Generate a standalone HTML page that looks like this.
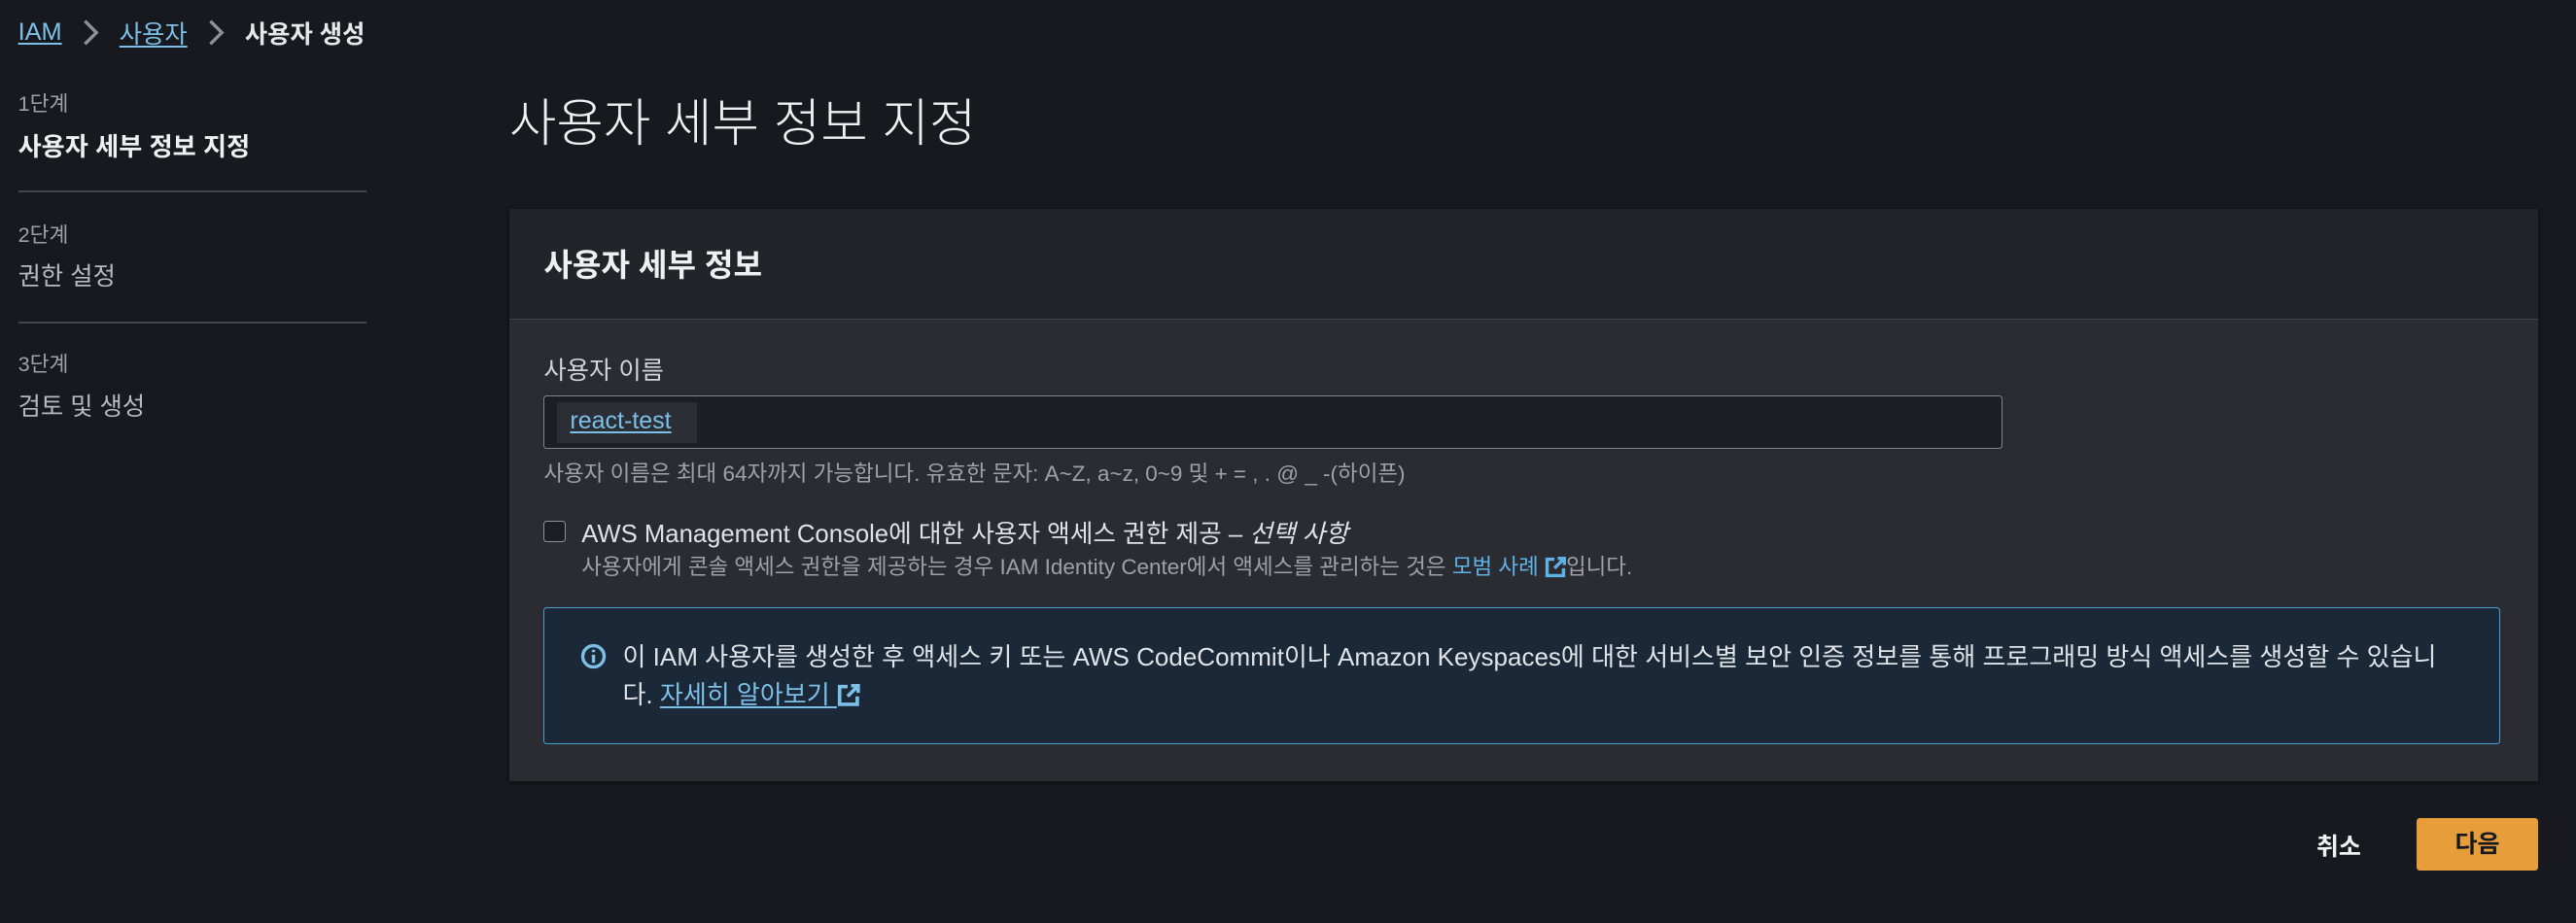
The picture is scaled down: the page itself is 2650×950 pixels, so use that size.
<!DOCTYPE html>
<html><head><meta charset="utf-8"><style>
html,body{margin:0;padding:0;background:#18191e;width:2650px;height:950px;overflow:hidden}
#z{zoom:1.69;position:relative;width:1568px;height:562px;font-family:"Liberation Sans","Noto Sans CJK KR",sans-serif;color:#d1d5db}
.a{position:absolute;white-space:nowrap}
.lnk{color:#7cc0e8;text-decoration:underline;text-underline-offset:2px}
.g{color:#9da2aa}
.div{position:absolute;left:11px;width:212px;height:1px;background:#414650}
.bc{position:absolute;left:11px;top:8px;height:24px;display:flex;align-items:center;font-size:15px;white-space:nowrap}
</style></head><body><div id="z">
<div class="bc"><span class="lnk">IAM</span>
<svg style="margin:0 11px 0 12px" width="12" height="16" viewBox="0 0 12 16"><path d="M2 1l7 7-7 7" fill="none" stroke="#8d9199" stroke-width="2"/></svg>
<span class="lnk">사용자</span>
<svg style="margin:0 11px 0 12px" width="12" height="16" viewBox="0 0 12 16"><path d="M2 1l7 7-7 7" fill="none" stroke="#8d9199" stroke-width="2"/></svg>
<b style="color:#e6e8eb">사용자 생성</b></div>

<div class="a g" style="left:11px;top:53px;font-size:12.8px">1단계</div>
<div class="a" style="left:11px;top:77px;font-size:15.5px;font-weight:bold;color:#eef0f2">사용자 세부 정보 지정</div>
<div class="div" style="top:116px"></div>
<div class="a g" style="left:11px;top:133px;font-size:12.8px">2단계</div>
<div class="a g" style="left:11px;top:157px;font-size:15px;color:#b5b9c0">권한 설정</div>
<div class="div" style="top:196px"></div>
<div class="a g" style="left:11px;top:212px;font-size:12.8px">3단계</div>
<div class="a g" style="left:11px;top:236px;font-size:15px;color:#b5b9c0">검토 및 생성</div>

<div class="a" style="left:310px;top:50px;font-size:31.2px;font-weight:300;color:#eef0f2">사용자 세부 정보 지정</div>

<div class="a" style="left:310px;top:127px;width:1235px;height:349px;background:#2a2c31;box-shadow:0 1px 3px rgba(0,0,0,.5)">
 <div style="height:67px;background:#232429;border-bottom:1px solid #3e4148"></div>
</div>
<div class="a" style="left:331px;top:147px;font-size:19px;font-weight:bold;color:#eef0f2">사용자 세부 정보</div>
<div class="a" style="left:331px;top:214px;font-size:15px;color:#d1d5db">사용자 이름</div>
<div class="a" style="left:331px;top:241px;width:887px;height:31px;border:1px solid #80858d;border-radius:2px;background:#1b1e25"></div>
<div class="a" style="left:339px;top:245px;width:85px;height:25px;background:#2b2e35"></div>
<div class="a lnk" style="left:347px;top:248px;font-size:14.8px">react-test</div>
<div class="a g" style="left:331px;top:278px;font-size:13.3px">사용자 이름은 최대 64자까지 가능합니다. 유효한 문자: A~Z, a~z, 0~9 및 + = , . @ _ -(하이픈)</div>

<div class="a" style="left:331px;top:317px;width:12px;height:12px;border:1px solid #8d9199;border-radius:2px;background:#1b1e25"></div>
<div class="a" style="left:354px;top:313px;font-size:15.2px;color:#dfe2e6">AWS Management Console에 대한 사용자 액세스 권한 제공 – <i>선택 사항</i></div>
<div class="a g" style="left:354px;top:335px;font-size:13.3px">사용자에게 콘솔 액세스 권한을 제공하는 경우 IAM Identity Center에서 액세스를 관리하는 것은 <span style="color:#5eb3e6">모범 사례 <svg width="13" height="13" viewBox="0 0 13 13" style="vertical-align:-2px"><path d="M6 1.5H1.5v10h10V7" fill="none" stroke="#5eb3e6" stroke-width="2"/><path d="M8 1h4v4M12 1L6 7" fill="none" stroke="#5eb3e6" stroke-width="2"/></svg></span>입니다.</div>

<div class="a" style="left:331px;top:370px;width:1190px;height:82px;background:#1b2838;border:1px solid #4a9fd1;border-radius:2px"></div>
<svg class="a" style="left:353px;top:392px" width="16" height="16" viewBox="0 0 16 16"><circle cx="8" cy="8" r="6.5" fill="none" stroke="#7cc0e8" stroke-width="2"/><path d="M8 7v5M8 4v1.5" stroke="#7cc0e8" stroke-width="2"/></svg>
<div class="a" style="left:379px;top:389px;font-size:15.4px;line-height:23px;color:#e0e3e7">이 IAM 사용자를 생성한 후 액세스 키 또는 AWS CodeCommit이나 Amazon Keyspaces에 대한 서비스별 보안 인증 정보를 통해 프로그래밍 방식 액세스를 생성할 수 있습니<br>다. <span class="lnk">자세히 알아보기 <svg width="14" height="14" viewBox="0 0 13 13" style="vertical-align:-2px"><path d="M6 1.5H1.5v10h10V7" fill="none" stroke="#7cc0e8" stroke-width="2"/><path d="M8 1h4v4M12 1L6 7" fill="none" stroke="#7cc0e8" stroke-width="2"/></svg></span></div>

<div class="a" style="left:1410px;top:504px;font-size:14.8px;font-weight:bold;color:#eef0f2">취소</div>
<div class="a" style="left:1471px;top:498px;width:74px;height:32px;background:#e69d3a;border-radius:2px;font-size:14.8px;font-weight:bold;color:#16191f;text-align:center;line-height:32px">다음</div>
</div></body></html>
